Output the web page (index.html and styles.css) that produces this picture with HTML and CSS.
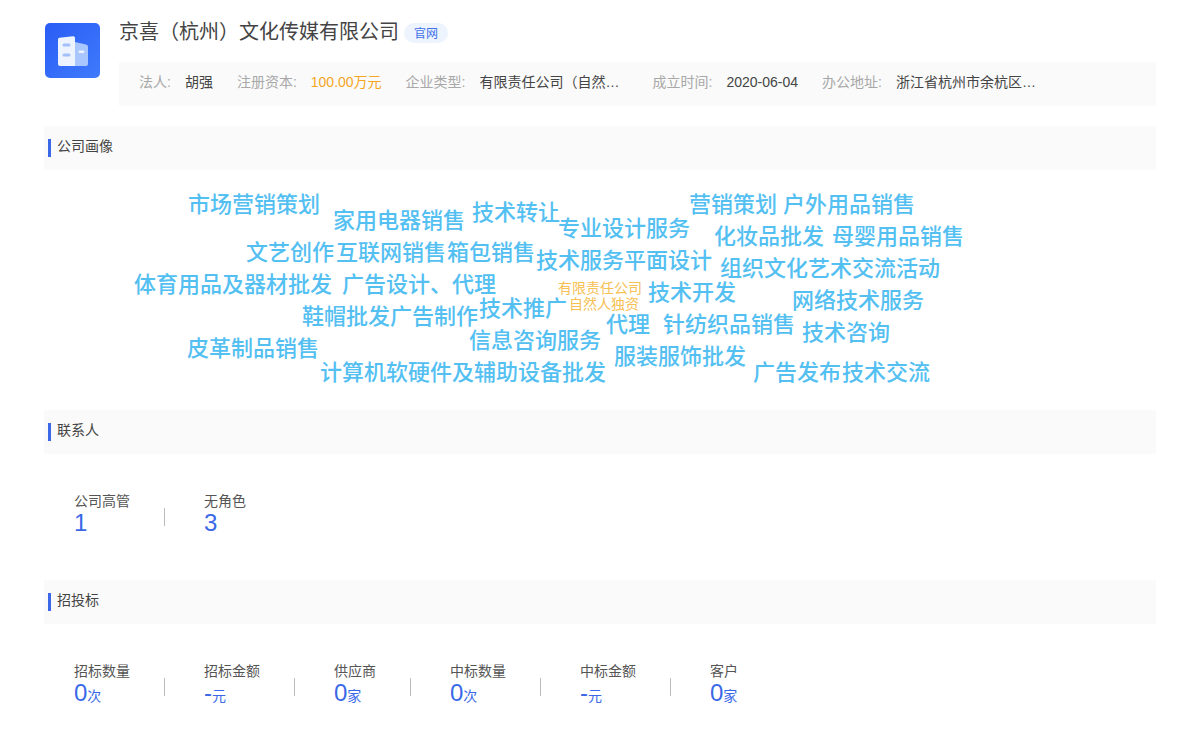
FILE: index.html
```html
<!DOCTYPE html>
<html lang="zh-CN">
<head>
    <meta charset="UTF-8">
    <title>京喜（杭州）文化传媒有限公司</title>
    <link rel="stylesheet" href="styles.css">
</head>
<body>

<header class="company">
    <div class="logo">
        <svg width="30" height="30" viewBox="0 0 30 30">
            <path d="M17 6 L28 8.500 Q30 9 30 10.500 L30 28 Q30 30 28 30 L17 30 Z" fill="#a9c6ff"/>
            <path d="M0 3.500 Q0 2 1.500 1.800 L15 0.200 Q17 0 17 2 L17 30 L2 30 Q0 30 0 28 Z" fill="#eef4ff"/>
            <rect x="4.500" y="7.500" width="8" height="3" rx="1.500" fill="#a4c0fb"/>
            <rect x="4.500" y="17.500" width="8" height="3" rx="1.500" fill="#a4c0fb"/>
            <rect x="20.500" y="14.500" width="6" height="2.500" rx="1.200" fill="#eef4ff"/>
        </svg>
    </div>
    <div class="company-main">
        <div class="company-title">
            <h1>京喜（杭州）文化传媒有限公司</h1>
            <span class="site-tag">官网</span>
        </div>
        <div class="info-bar">
            <div class="info-item"><span class="info-label">法人:</span><span class="info-value">胡强</span></div>
            <div class="info-item"><span class="info-label">注册资本:</span><span class="info-value money">100.00万元</span></div>
            <div class="info-item"><span class="info-label">企业类型:</span><span class="info-value clip">有限责任公司（自然…</span></div>
            <div class="info-item"><span class="info-label">成立时间:</span><span class="info-value">2020-06-04</span></div>
            <div class="info-item"><span class="info-label">办公地址:</span><span class="info-value clip">浙江省杭州市余杭区…</span></div>
        </div>
    </div>
</header>

<section>
    <h2 class="section-head">公司画像</h2>
    <div class="cloud">
        <span class="word" style="left:144px;top:35px">市场营销策划</span>
        <span class="word" style="left:289px;top:51px">家用电器销售</span>
        <span class="word" style="left:428px;top:43px">技术转让</span>
        <span class="word" style="left:514px;top:59px">专业设计服务</span>
        <span class="word" style="left:645px;top:35px">营销策划</span>
        <span class="word" style="left:739px;top:35px">户外用品销售</span>
        <span class="word" style="left:670px;top:67px">化妆品批发</span>
        <span class="word" style="left:788px;top:67px">母婴用品销售</span>
        <span class="word" style="left:202px;top:83px">文艺创作</span>
        <span class="word" style="left:292px;top:83px">互联网销售</span>
        <span class="word" style="left:403px;top:83px">箱包销售</span>
        <span class="word" style="left:492px;top:91px">技术服务</span>
        <span class="word" style="left:580px;top:91px">平面设计</span>
        <span class="word" style="left:676px;top:99px">组织文化艺术交流活动</span>
        <span class="word" style="left:90px;top:115px">体育用品及器材批发</span>
        <span class="word" style="left:298px;top:115px">广告设计、代理</span>
        <span class="word small" style="left:514px;top:118px">有限责任公司</span>
        <span class="word small" style="left:525px;top:134px">自然人独资</span>
        <span class="word" style="left:604px;top:123px">技术开发</span>
        <span class="word" style="left:748px;top:131px">网络技术服务</span>
        <span class="word" style="left:258px;top:147px">鞋帽批发</span>
        <span class="word" style="left:346px;top:147px">广告制作</span>
        <span class="word" style="left:435px;top:139px">技术推广</span>
        <span class="word" style="left:562px;top:155px">代理</span>
        <span class="word" style="left:619px;top:155px">针纺织品销售</span>
        <span class="word" style="left:758px;top:163px">技术咨询</span>
        <span class="word" style="left:425px;top:171px">信息咨询服务</span>
        <span class="word" style="left:143px;top:179px">皮革制品销售</span>
        <span class="word" style="left:570px;top:187px">服装服饰批发</span>
        <span class="word" style="left:276px;top:203px">计算机软硬件及辅助设备批发</span>
        <span class="word" style="left:709px;top:203px">广告发布</span>
        <span class="word" style="left:798px;top:203px">技术交流</span>
    </div>
</section>

<section>
    <h2 class="section-head">联系人</h2>
    <div class="stats">
        <div class="stat"><div class="stat-label">公司高管</div><div class="stat-num">1</div></div>
        <div class="stat"><div class="stat-label">无角色</div><div class="stat-num">3</div></div>
    </div>
</section>

<section>
    <h2 class="section-head">招投标</h2>
    <div class="stats">
        <div class="stat"><div class="stat-label">招标数量</div><div class="stat-num">0<small>次</small></div></div>
        <div class="stat"><div class="stat-label">招标金额</div><div class="stat-num">-<small>元</small></div></div>
        <div class="stat"><div class="stat-label">供应商</div><div class="stat-num">0<small>家</small></div></div>
        <div class="stat"><div class="stat-label">中标数量</div><div class="stat-num">0<small>次</small></div></div>
        <div class="stat"><div class="stat-label">中标金额</div><div class="stat-num">-<small>元</small></div></div>
        <div class="stat"><div class="stat-label">客户</div><div class="stat-num">0<small>家</small></div></div>
    </div>
</section>

</body>
</html>
```

FILE: styles.css
```css
body {
    margin: 0;
    padding: 0 44px;
    font-family: "Liberation Sans", "Noto Sans CJK SC", sans-serif;
    color: #333;
    background-color: #fff;
    overflow: hidden;
}
.company {
    display: flex;
    padding-top: 18px;
}
.logo {
    display: flex;
    align-items: center;
    justify-content: center;
    width: 55px;
    height: 55px;
    margin: 5px 19px 0 1px;
    flex-shrink: 0;
    border-radius: 5px;
    background: linear-gradient(135deg, #2a5cf6, #3f7bfb);
}
.company-main {
    flex: 1;
}
.company-title {
    display: flex;
    align-items: center;
    height: 26px;
}
h1 {
    margin: -2px 0 0;
    font-size: 20px;
    font-weight: 400;
    color: #444;
}
.site-tag {
    margin: 4px 0 0 5px;
    padding: 1px 10px 0;
    height: 19px;
    line-height: 20px;
    font-size: 12px;
    color: #3f6fe8;
    background-color: #eef4fd;
    border-radius: 10px;
}
.info-bar {
    display: flex;
    align-items: center;
    gap: 24px;
    height: 40px;
    margin-top: 18px;
    padding: 0 0 4px 20px;
    font-size: 14px;
    line-height: 20px;
    background-color: #fafafa;
}
.info-item {
    display: flex;
    align-items: baseline;
}
.info-label {
    margin-right: 14px;
    color: #a8a8a8;
}
.info-value {
    color: #444;
    white-space: nowrap;
}
.money {
    color: #f5a623;
}
.clip {
    width: 149px;
}
.section-head {
    position: relative;
    height: 44px;
    margin: 0;
    padding-left: 13px;
    line-height: 40px;
    font-size: 14px;
    font-weight: 400;
    color: #444;
    background-color: #fafafa;
}
.section-head::before {
    content: "";
    position: absolute;
    left: 4px;
    top: 13px;
    width: 3px;
    height: 18px;
    background-color: #3a68e8;
}
section:nth-of-type(1) {
    margin-top: 20px;
}
.cloud {
    position: relative;
    height: 240px;
}
.word {
    position: absolute;
    font-size: 22px;
    line-height: 30px;
    margin-top: -15px;
    white-space: nowrap;
    color: #54c0f2;
    font-weight: 500;
}
.small {
    font-size: 14px;
    line-height: 16px;
    margin-top: -8px;
    font-weight: 400;
    color: #f6c052;
}
.stats {
    display: flex;
    padding: 38px 0 0 30px;
    height: 88px;
}
.stat {
    position: relative;
    padding-right: 35px;
    margin-right: 39px;
    height: 47px;
}
.stat:last-child::after {
    display: none;
}
.stat::after {
    content: "";
    position: absolute;
    right: 0;
    bottom: 13px;
    width: 1px;
    height: 18px;
    background-color: #bbb;
}
.stat-label {
    font-size: 14px;
    line-height: 18px;
    color: #555;
}
.stat-num {
    margin-top: 1px;
    font-size: 24px;
    line-height: 24px;
    color: #3a68e8;
}
.stat-num small {
    font-size: 14px;
}
```
